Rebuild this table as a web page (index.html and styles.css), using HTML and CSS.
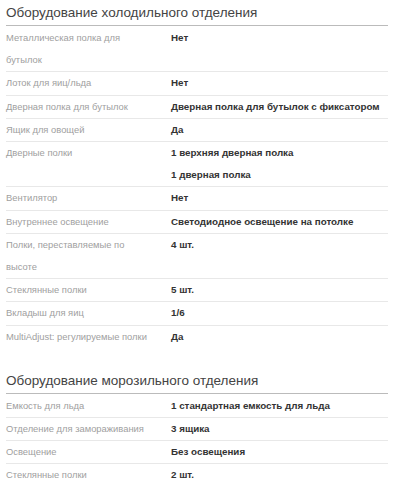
FILE: index.html
```html
<!DOCTYPE html>
<html lang="ru">
<head>
<meta charset="utf-8">
<link rel="stylesheet" href="styles.css">
</head>
<body>
<div class="page">
  <section class="group">
    <h2 class="group-title">Оборудование холодильного отделения</h2>
    <div class="specs">
      <div class="row"><div class="label">Металлическая полка для бутылок</div><div class="value">Нет</div></div>
      <div class="row"><div class="label">Лоток для яиц/льда</div><div class="value">Нет</div></div>
      <div class="row"><div class="label">Дверная полка для бутылок</div><div class="value">Дверная полка для бутылок с фиксатором</div></div>
      <div class="row"><div class="label">Ящик для овощей</div><div class="value">Да</div></div>
      <div class="row"><div class="label">Дверные полки</div><div class="value">1 верхняя дверная полка<br>1 дверная полка</div></div>
      <div class="row"><div class="label">Вентилятор</div><div class="value">Нет</div></div>
      <div class="row"><div class="label">Внутреннее освещение</div><div class="value">Светодиодное освещение на потолке</div></div>
      <div class="row"><div class="label">Полки, переставляемые по высоте</div><div class="value">4 шт.</div></div>
      <div class="row"><div class="label">Стеклянные полки</div><div class="value">5 шт.</div></div>
      <div class="row"><div class="label">Вкладыш для яиц</div><div class="value">1/6</div></div>
      <div class="row"><div class="label">MultiAdjust: регулируемые полки</div><div class="value">Да</div></div>
    </div>
  </section>
  <section class="group">
    <h2 class="group-title">Оборудование морозильного отделения</h2>
    <div class="specs">
      <div class="row"><div class="label">Емкость для льда</div><div class="value">1 стандартная емкость для льда</div></div>
      <div class="row"><div class="label">Отделение для замораживания</div><div class="value">3 ящика</div></div>
      <div class="row"><div class="label">Освещение</div><div class="value">Без освещения</div></div>
      <div class="row"><div class="label">Стеклянные полки</div><div class="value">2 шт.</div></div>
    </div>
  </section>
</div>
</body>
</html>
```
FILE: styles.css
```css
html, body {
  margin: 0;
  padding: 0;
  background: #fff;
}
.page {
  padding: 0 5px 0 6px;
  font-family: "Liberation Sans", Arial, sans-serif;
}
.group {
  margin-bottom: 20px;
}
.group-title {
  margin: 0;
  font-size: 13.5px;
  font-weight: normal;
  color: #444;
  line-height: 25px;
  height: 25px;
  border-bottom: 1px solid #bbb;
}
.specs {
  display: flex;
  flex-direction: column;
  padding-top: 1px;
}
.row {
  display: grid;
  grid-template-columns: 144px 1fr;
  column-gap: 21px;
  border-bottom: 1px solid #e8e8e8;
  line-height: 22.2px;
}
.row:last-child {
  border-bottom: none;
}
.label {
  color: #a0a0a0;
  font-size: 9.4px;
}
.value {
  color: #333;
  font-weight: bold;
  font-size: 9.8px;
}
```
